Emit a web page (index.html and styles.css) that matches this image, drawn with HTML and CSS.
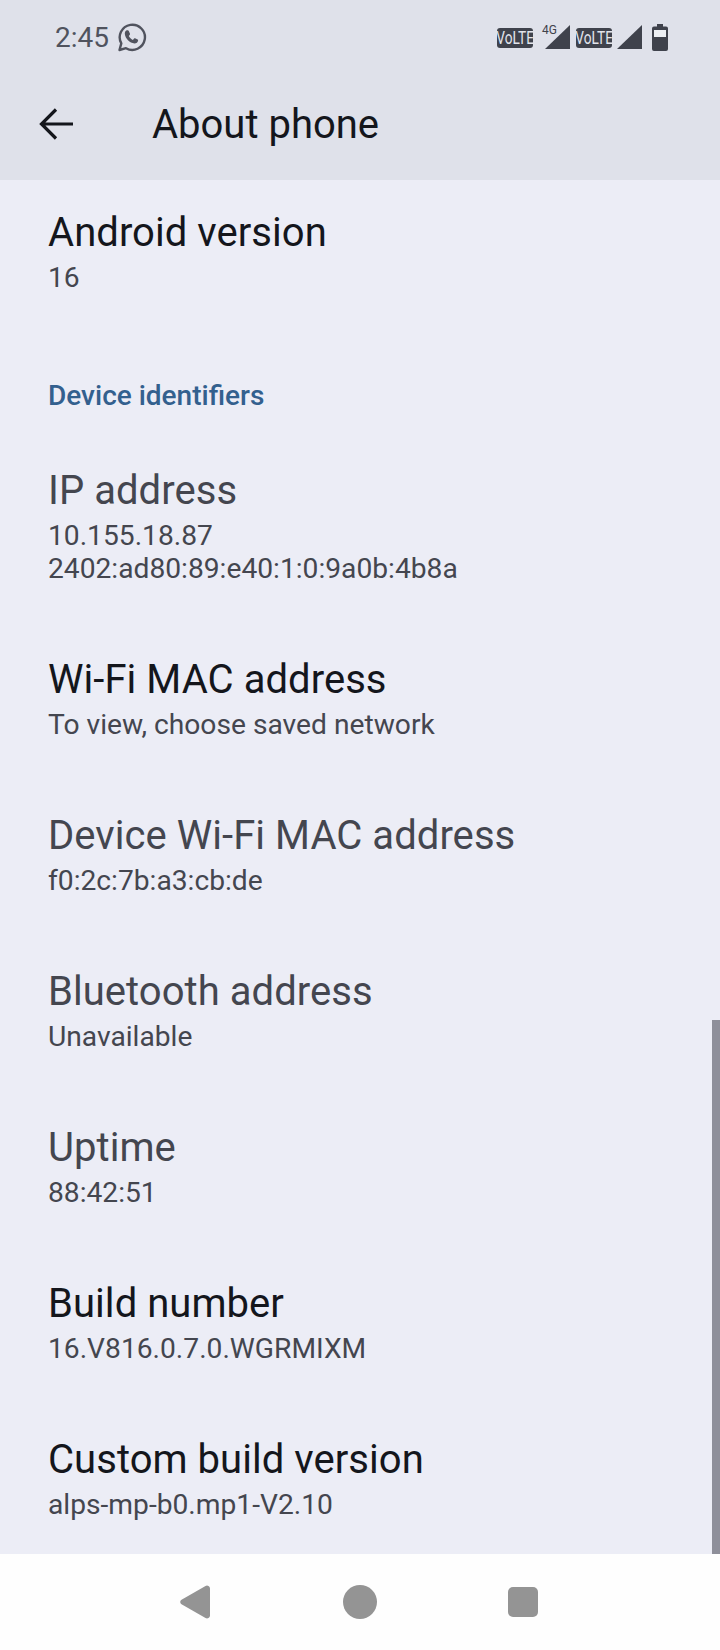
FILE: index.html
```html
<!DOCTYPE html>
<html lang="en">
<head>
    <meta charset="UTF-8">
    <meta name="viewport" content="width=device-width, initial-scale=1.0">
    <title>About phone</title>
    <link rel="stylesheet" href="styles.css">
</head>
<body>
    <div class="phone">
        <header class="top">
            <div class="status">
                <div class="status-left">
                    <span class="clock">2:45</span>
                    <svg class="wa" width="30" height="30" viewBox="0 0 30 30">
                        <path d="M2.5 28l1.8-6.6A12.6 12.6 0 1 1 9 26.2z" fill="none" stroke="#50535e" stroke-width="2.4" stroke-linejoin="round"/>
                        <path d="M10.6 8.6c.5 0 1 0 1.300.7l1.100 2.500c.1.400 0 .7-.2 1l-1 1.200c.9 1.800 2.300 3 4.100 3.900l1.200-1.400c.3-.3.600-.4 1-.2l2.500 1.200c.4.200.6.500.5.900-.2 1.900-1.800 3-3.600 3-4.700-.3-9.300-4.700-9.700-9.600 0-1.300.7-3.700 2.800-3.700z" fill="#50535e"/>
                    </svg>
                </div>
                <div class="status-right">
                    <span class="volte"><span class="volte-text">VoLTE</span></span>
                    <span class="signal">
                        <span class="net">4G</span>
                        <svg width="25" height="24" viewBox="0 0 25 24"><path d="M25 0v24H0z" fill="#3f424c"/></svg>
                    </span>
                    <span class="volte"><span class="volte-text">VoLTE</span></span>
                    <svg class="signal-2" width="25" height="24" viewBox="0 0 25 24"><path d="M25 0v24H0z" fill="#3f424c"/></svg>
                    <svg class="battery" width="16" height="27" viewBox="0 0 16 27">
                        <path d="M5 0h6v2.500h3a2 2 0 0 1 2 2V25a2 2 0 0 1-2 2H2a2 2 0 0 1-2-2V4.500a2 2 0 0 1 2-2h3z" fill="#3f424c"/>
                        <rect x="2" y="6" width="12" height="7" fill="#eceef3"/>
                    </svg>
                </div>
            </div>
            <div class="app-bar">
                <svg class="back" width="36" height="36" viewBox="0 0 36 36">
                    <path d="M35 18H5M18 3.500L3.500 18 18 32.500" fill="none" stroke="#14161c" stroke-width="3.200"/>
                </svg>
                <h1>About phone</h1>
            </div>
        </header>

        <main class="content">
            <div class="scroll-thumb"></div>

            <div class="row first">
                <div class="row-title">Android version</div>
                <div class="row-sub">16</div>
            </div>

            <h2 class="section">Device identifiers</h2>

            <div class="row tall">
                <div class="row-title muted">IP address</div>
                <div class="row-sub">10.155.18.87<br>2402:ad80:89:e40:1:0:9a0b:4b8a</div>
            </div>
            <div class="row">
                <div class="row-title">Wi-Fi MAC address</div>
                <div class="row-sub">To view, choose saved network</div>
            </div>
            <div class="row">
                <div class="row-title muted">Device Wi-Fi MAC address</div>
                <div class="row-sub">f0:2c:7b:a3:cb:de</div>
            </div>
            <div class="row">
                <div class="row-title muted">Bluetooth address</div>
                <div class="row-sub">Unavailable</div>
            </div>
            <div class="row">
                <div class="row-title muted">Uptime</div>
                <div class="row-sub">88:42:51</div>
            </div>
            <div class="row">
                <div class="row-title">Build number</div>
                <div class="row-sub">16.V816.0.7.0.WGRMIXM</div>
            </div>
            <div class="row">
                <div class="row-title">Custom build version</div>
                <div class="row-sub">alps-mp-b0.mp1-V2.10</div>
            </div>
        </main>

        <nav class="nav-bar">
            <svg width="30" height="34" viewBox="0 0 30 34"><path d="M25.500 1L1.500 14.800a2.500 2.500 0 0 0 0 4.400L25.500 33a3 3 0 0 0 4.500-2.600V3.600A3 3 0 0 0 25.500 1z" fill="#949494"/></svg>
            <span class="nav-circle"></span>
            <span class="nav-square"></span>
        </nav>
    </div>
</body>
</html>
```
FILE: styles.css
```css
* {
    box-sizing: border-box;
}
body {
    margin: 0;
    font-family: Roboto, "Noto Sans", sans-serif;
    background: #ecedf6;
}
.phone {
    width: 720px;
    height: 1650px;
    display: flex;
    flex-direction: column;
    overflow: hidden;
}
.top {
    height: 180px;
    background: #dfe1ea;
    flex-shrink: 0;
}
.status {
    height: 74px;
    display: flex;
    justify-content: space-between;
    align-items: center;
    padding: 0 52px 0 55px;
}
.status-left,
.status-right {
    display: flex;
    align-items: center;
}
.clock {
    font-size: 28px;
    color: #50535e;
}
.wa {
    margin-left: 8px;
}
.volte {
    width: 36px;
    height: 20px;
    border-radius: 3px;
    background: #3f424c;
    display: flex;
    justify-content: center;
    transform: translateY(1px);
}
.volte-text {
    color: #e3e5ec;
    font-size: 19px;
    line-height: 20px;
    transform: scaleX(0.72);
}
.signal {
    display: flex;
    align-items: flex-end;
    margin-left: 5px;
    position: relative;
    width: 32px;
    justify-content: flex-end;
}
.net {
    position: absolute;
    left: 4px;
    top: -2px;
    font-size: 12px;
    color: #3f424c;
}
.signal + .volte {
    margin-left: 6px;
}
.signal-2 {
    margin-left: 5px;
}
.battery {
    margin-left: 10px;
}
.app-bar {
    height: 106px;
    display: flex;
    align-items: center;
    padding: 0 0 6px 38px;
}
.app-bar h1 {
    margin: 0 0 0 78px;
    font-size: 40px;
    font-weight: 400;
    color: #14161c;
}
.content {
    flex: 1;
    min-height: 0;
    overflow: hidden;
    position: relative;
    padding-left: 48px;
}
.scroll-thumb {
    position: absolute;
    top: 840px;
    right: 0;
    bottom: 0;
    width: 8px;
    background: #8e8f9a;
}
.row {
    height: 156px;
    padding-top: 30px;
}
.row.first {
    height: 199px;
    padding-top: 31px;
}
.row.tall {
    height: 189px;
}
.row-title {
    font-size: 40px;
    line-height: 44px;
    letter-spacing: 0.05px;
    color: #14161c;
}
.row-title.muted {
    color: #44464f;
}
.row-sub {
    font-size: 28.2px;
    line-height: 33px;
    color: #44464f;
    margin-top: 6px;
}
.section {
    margin: 0;
    height: 60px;
    font-size: 28px;
    line-height: 34px;
    font-weight: 500;
    color: #33608e;
}
.nav-bar {
    height: 96px;
    flex-shrink: 0;
    background: #fefefe;
    display: flex;
    align-items: center;
    padding: 0 0 0 180px;
}
.nav-circle {
    width: 34px;
    height: 34px;
    border-radius: 50%;
    background: #949494;
    margin-left: 133px;
}
.nav-square {
    width: 30px;
    height: 30px;
    border-radius: 5px;
    background: #949494;
    margin-left: 131px;
}
```
